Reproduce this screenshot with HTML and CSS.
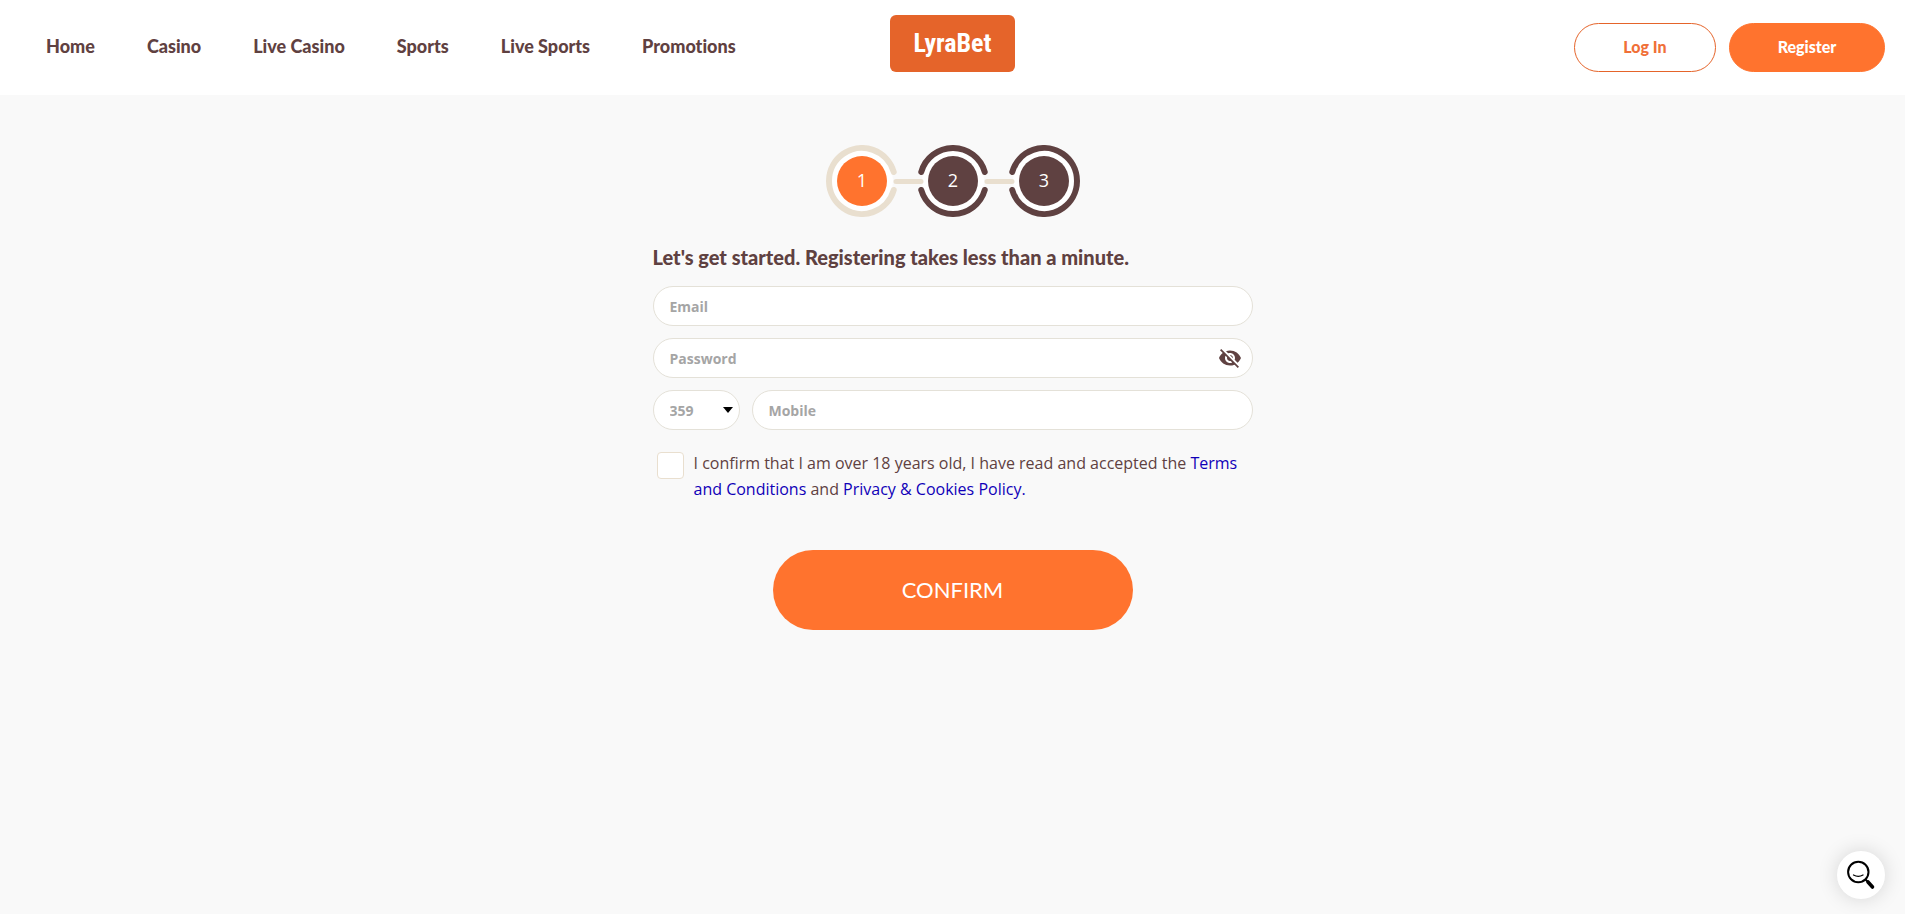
FILE: index.html
```html
<!DOCTYPE html>
<html lang="en">
  <head>
    <meta charset="utf-8">
    <meta name="viewport" content="width=device-width, initial-scale=1">
    <title>Register | LyraBet</title>
    <link rel="stylesheet" href="styles.css">
  </head>
  <body>
    <header class="header">
      <nav class="nav">
        <a href="#">Home</a>
        <a href="#">Casino</a>
        <a href="#">Live Casino</a>
        <a href="#">Sports</a>
        <a href="#">Live Sports</a>
        <a href="#">Promotions</a>
      </nav>
      <a class="logo" href="#">LyraBet</a>
      <div class="account">
        <button class="btn btn-login" type="button">Log In</button>
        <button class="btn btn-register" type="button">Register</button>
      </div>
    </header>

    <main class="register">
      <svg class="steps" width="254" height="72" viewBox="0 0 254 72">
        <!-- open rings -->
        <g class="disc">
          <circle cx="36" cy="36" r="31" />
          <circle cx="127" cy="36" r="31" />
          <circle cx="218" cy="36" r="31" />
        </g>
        <path class="ring ring-current" d="M67.750 27A33 33 0 1 0 67.750 45" />
        <path class="ring" d="M95.250 27A33 33 0 0 1 158.750 27M95.250 45A33 33 0 0 0 158.750 45" />
        <path class="ring" d="M186.250 27A33 33 0 1 1 186.250 45" />
        <!-- connectors -->
        <path class="link" d="M70 36.500H95M161 36.500H186" />
        <circle class="dot dot-current" cx="36" cy="36" r="25" />
        <circle class="dot" cx="127" cy="36" r="25" />
        <circle class="dot" cx="218" cy="36" r="25" />
        <text x="36" y="42">1</text>
        <text x="127" y="42">2</text>
        <text x="218" y="42">3</text>
      </svg>

      <h1 class="title">Let's get started. Registering takes less than a minute.</h1>

      <form class="form">
        <input class="field" type="email" placeholder="Email" aria-label="Email">
        <div class="password">
          <input class="field" type="password" placeholder="Password" aria-label="Password">
          <button class="toggle" type="button" aria-label="Show password">
            <svg width="24" height="24" viewBox="0 0 24 24">
              <path d="M12 7c2.760 0 5 2.240 5 5 0 .65-.13 1.260-.36 1.830l2.920 2.920c1.510-1.260 2.700-2.890 3.430-4.750-1.730-4.390-6-7.500-11-7.500-1.400 0-2.740.25-3.980.7l2.160 2.160C10.740 7.130 11.350 7 12 7zM2 4.270l2.280 2.280.46.46C3.080 8.300 1.780 10.020 1 12c1.730 4.390 6 7.500 11 7.500 1.550 0 3.030-.3 4.380-.84l.42.42L19.730 22 21 20.730 3.270 3 2 4.270zM7.530 9.800l1.550 1.550c-.05.21-.08.43-.08.65 0 1.660 1.340 3 3 3 .22 0 .44-.03.65-.08l1.550 1.550c-.67.33-1.410.53-2.200.53-2.760 0-5-2.240-5-5 0-.79.2-1.530.53-2.200zm4.310-.78l3.150 3.150.02-.16c0-1.660-1.340-3-3-3l-.17.010z" />
            </svg>
          </button>
        </div>
        <div class="phone">
          <select class="field code" aria-label="Country code">
            <option>359</option>
          </select>
          <input class="field" type="tel" placeholder="Mobile" aria-label="Mobile">
        </div>
        <div class="terms">
          <input class="check" type="checkbox" id="terms">
          <label for="terms">I confirm that I am over 18 years old, I have read and accepted the <a href="#">Terms and Conditions</a> and <a href="#">Privacy &amp; Cookies Policy.</a></label>
        </div>
        <button class="confirm" type="submit">CONFIRM</button>
      </form>
    </main>

    <button class="help" type="button" aria-label="Help">
      <svg width="30" height="30" viewBox="0 0 30 30">
        <circle cx="12.300" cy="12" r="10.200" fill="none" stroke="#000" stroke-width="2" />
        <path d="M7.500 15Q12.300 17.600 17 15" fill="none" stroke="#000" stroke-width="1.300" stroke-linecap="round" />
        <path d="M19.500 19.500L22 22" stroke="#000" stroke-width="2" />
        <path d="M22 22L26.500 27" stroke="#000" stroke-width="3.600" stroke-linecap="round" />
      </svg>
    </button>
  </body>
</html>
```
FILE: styles.css
```css
* {
  box-sizing: border-box;
}
body {
  margin: 0;
  background-color: #f9f9f9;
  color: #5f4141;
  font-family: "Open Sans", sans-serif;
  font-size: 16px;
}
button {
  cursor: pointer;
}

/* Top bar */
.header {
  display: grid;
  grid-template-columns: 1fr auto 1fr;
  align-items: center;
  height: 95px;
  padding: 0 20px;
  background-color: #fff;
}
.nav {
  display: flex;
  gap: 52px;
  padding: 0 0 3px 26px;
}
.nav a {
  color: #5f4141;
  font-family: Lato, sans-serif;
  font-size: 18px;
  font-weight: 900;
  font-variant-ligatures: none;
  text-decoration: none;
  white-space: nowrap;
}
.logo {
  align-self: start;
  width: 125px;
  margin-top: 15px;
  border-radius: 6px;
  background-color: #e5642a;
  color: #fff;
  font-family: "Roboto Condensed", Roboto, sans-serif;
  font-size: 26px;
  font-weight: bold;
  line-height: 57px;
  text-align: center;
  text-decoration: none;
}
.account {
  display: flex;
  justify-content: flex-end;
  gap: 13px;
}
.btn {
  height: 49px;
  padding: 0 0 2px;
  border: 1px solid #ff732e;
  border-radius: 25px;
  font-family: Lato, sans-serif;
  font-size: 16px;
  font-weight: 900;
}
.btn-login {
  width: 142px;
  border-color: #e5642a;
  background-color: #fff;
  color: #f07038;
}
.btn-register {
  width: 156px;
  background-color: #ff732e;
  color: #fff;
}

/* Registration */
.register {
  display: flex;
  flex-direction: column;
  align-items: center;
  width: 100%;
  max-width: 600px;
  margin: 0 auto;
  padding-top: 50px;
}
.steps text {
  fill: #fff;
  font-size: 18px;
  text-anchor: middle;
}
.disc {
  fill: #fff;
}
.ring {
  fill: none;
  stroke: #5f4141;
  stroke-width: 6px;
  stroke-linecap: round;
}
.ring-current,
.link {
  stroke: #e9dfcf;
}
.link {
  stroke-width: 5px;
  stroke-linecap: round;
}
.dot {
  fill: #5f4141;
}
.dot-current {
  fill: #ff732e;
}
.title {
  align-self: stretch;
  margin: 24px 0 13px;
  font-family: Lato, sans-serif;
  font-size: 20px;
  font-weight: 900;
  line-height: 32px;
}
.form {
  display: flex;
  flex-direction: column;
  gap: 12px;
  width: 100%;
}
.field {
  width: 100%;
  height: 40px;
  padding: 0 16px;
  border: 1px solid #e4e1d8;
  border-radius: 20px;
  background-color: #fff;
  color: #a5a5a5;
  font-family: "Open Sans", sans-serif;
  font-size: 14px;
  font-weight: bold;
}
.field::placeholder {
  color: #a5a5a5;
}
.password {
  position: relative;
}
.toggle {
  position: absolute;
  top: 8px;
  right: 11px;
  height: 24px;
  padding: 0;
  border: none;
  background: none;
}
.toggle path {
  fill: #5f4141;
}
.phone {
  display: flex;
  gap: 12px;
}
.code {
  flex: none;
  width: 87px;
  appearance: none;
  background-image: url("data:image/svg+xml,%3Csvg xmlns='http://www.w3.org/2000/svg' width='10' height='6'%3E%3Cpath d='M0 0h10L5 6z'/%3E%3C/svg%3E");
  background-repeat: no-repeat;
  background-position: right 6px center;
}
.terms {
  display: flex;
  align-items: flex-start;
  gap: 10px;
  padding: 8px 4px 0;
  line-height: 26px;
}
.terms a {
  color: #1000b8;
  text-decoration: none;
}
.check {
  flex: none;
  width: 27px;
  height: 27px;
  margin: 2px 0 0;
  border: 1px solid #e9dfcf;
  border-radius: 4px;
  background-color: #fff;
  appearance: none;
}
.check:checked {
  background-color: #ff732e;
}
.confirm {
  align-self: center;
  width: 60%;
  height: 80px;
  margin-top: 36px;
  padding: 0 0 2px;
  border: none;
  border-radius: 40px;
  background-color: #ff732e;
  color: #fff;
  font-family: Lato, sans-serif;
  font-size: 22px;
}

/* Floating help */
.help {
  position: fixed;
  right: 20px;
  bottom: 15px;
  display: flex;
  align-items: center;
  justify-content: center;
  width: 48px;
  height: 48px;
  padding: 0;
  border: none;
  border-radius: 50%;
  background-color: #fff;
  box-shadow: 0 0 20px rgba(0, 0, 0, 0.15);
}
```
